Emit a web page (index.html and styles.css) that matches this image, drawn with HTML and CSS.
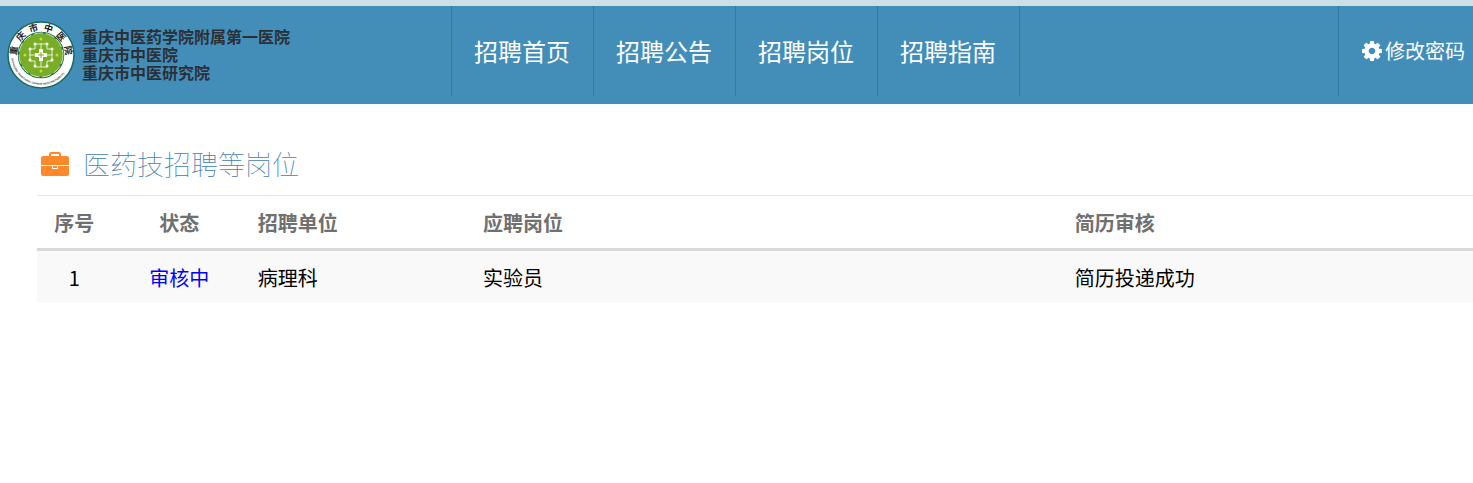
FILE: index.html
```html
<!DOCTYPE html>
<html lang="zh-CN">
<head>
<meta charset="utf-8">
<meta name="viewport" content="width=device-width, initial-scale=1">
<title>医药技招聘等岗位</title>
<link rel="stylesheet" href="styles.css">
</head>
<body>
<header class="header">
  <a class="brand" href="#">
    <svg class="brand-logo" viewBox="0 0 68 68" aria-hidden="true">
      <defs>
        <path id="arc-foot" d="M8.700 74A59.600 59.600 0 0 0 127.300 74"/>
      </defs>
      <circle cx="34" cy="34" r="33" fill="#fff" stroke="#176b5c" stroke-width="1.500"/>
      <circle cx="34" cy="34" r="22.500" fill="#78ad25" stroke="#176b5c" stroke-width="1.500"/>
      <circle cx="34" cy="34" r="22" fill="none" stroke="#d5e8a8" stroke-width="1" stroke-dasharray="9 3"/>
      <g fill="none" stroke="#e6f2c8" stroke-width="1">
        <path d="M34 22v24M22 34h24M28 23h12v5h5v12h-5v6H28v-6h-5V28h5z"/>
      </g>
      <g fill="#fff">
        <circle cx="28" cy="23" r="1.500"/><circle cx="40" cy="23" r="1.500"/>
        <circle cx="23" cy="28" r="1.500"/><circle cx="45" cy="28" r="1.500"/>
        <circle cx="23" cy="39" r="1.500"/><circle cx="45" cy="39" r="1.500"/>
        <circle cx="28" cy="45" r="1.500"/><circle cx="40" cy="45" r="1.500"/>
        <path d="M32 28h4v4h4v4h-4v4h-4v-4h-4v-4h4z"/>
      </g>
      <g fill="#b9dc4c">
        <circle cx="34" cy="18" r="1.500"/><circle cx="34" cy="50" r="1.500"/>
        <circle cx="18" cy="34" r="1.500"/><circle cx="50" cy="34" r="1.500"/>
      </g>
      <path d="M34 31v6M31 34h6" stroke="#78ad25" stroke-width="1"/>
      <g class="seal-name">
        <text transform="translate(7 29.500) rotate(-80)" y="3">重</text>
        <text transform="translate(14 15.500) rotate(-48)" y="3">庆</text>
        <text transform="translate(26.500 7.500) rotate(-16)" y="3">市</text>
        <text transform="translate(41.500 7.500) rotate(16)" y="3">中</text>
        <text transform="translate(54 15.500) rotate(48)" y="3">医</text>
        <text transform="translate(61 29.500) rotate(80)" y="3">院</text>
      </g>
      <text class="seal-foot" transform="scale(.5)"><textPath href="#arc-foot">CHONGQING TRADITIONAL CHINESE MEDICINE HOSPITAL</textPath></text>
    </svg>
    <span class="brand-text">
      <span>重庆中医药学院附属第一医院</span>
      <span>重庆市中医院</span>
      <span>重庆市中医研究院</span>
    </span>
  </a>
  <nav class="nav">
    <a class="nav-link" href="#">招聘首页</a>
    <a class="nav-link" href="#">招聘公告</a>
    <a class="nav-link" href="#">招聘岗位</a>
    <a class="nav-link" href="#">招聘指南</a>
  </nav>
  <a class="account-link" href="#">
    <svg class="cog" viewBox="0 128 1536 1536" aria-hidden="true"><path fill="currentColor" d="M1024 896q0-106-75-181t-181-75-181 75-75 181 75 181 181 75 181-75 75-181zm512-109v222q0 12-8 23t-20 13l-185 28q-19 54-39 91 35 50 107 138 10 12 10 25t-9 23q-27 37-99 108t-94 71q-12 0-26-9l-138-108q-44 23-91 38-16 136-29 186-7 28-36 28h-222q-14 0-24.500-8.500t-11.500-21.500l-28-184q-49-16-90-37l-141 107q-10 9-25 9-14 0-25-11-126-114-165-168-7-10-7-23 0-12 8-23 15-21 51-66.500t54-70.500q-27-50-41-99l-183-27q-13-2-21-12.500t-8-23.500v-222q0-12 8-23t19-13l186-28q14-46 39-92-40-57-107-138-10-12-10-24 0-10 9-23 26-36 98.500-107.500t94.500-71.500q13 0 26 10l138 107q44-23 91-38 16-136 29-186 7-28 36-28h222q14 0 24.500 8.500t11.500 21.500l28 184q49 16 90 37l142-107q9-9 24-9 13 0 25 10 129 119 165 170 7 8 7 22 0 12-8 23-15 21-51 66.500t-54 70.500q26 50 41 98l183 28q13 2 21 12.500t8 23.500z"/></svg>
    <span>修改密码</span>
  </a>
</header>
<main class="content">
  <h1 class="title">
    <svg class="briefcase" viewBox="0 0 28 24" aria-hidden="true">
      <path fill="none" stroke="#ff892a" stroke-width="2" d="M9 5V2q0-1 1-1h8q1 0 1 1v3"/>
      <path fill="#ff892a" d="M2 4h24q2 0 2 2v7H0V6q0-2 2-2zM0 14h11v2q0 1 1 1h4q1 0 1-1v-2h11v8q0 2-2 2H2q-2 0-2-2zM12 14h4v2h-4z"/>
    </svg>
    <span>医药技招聘等岗位</span>
  </h1>
  <table class="jobs">
    <thead>
      <tr>
        <th class="col-no" scope="col">序号</th>
        <th class="col-state" scope="col">状态</th>
        <th class="col-unit" scope="col">招聘单位</th>
        <th class="col-post" scope="col">应聘岗位</th>
        <th class="col-review" scope="col">简历审核</th>
      </tr>
    </thead>
    <tbody>
      <tr>
        <td class="col-no">1</td>
        <td class="col-state state">审核中</td>
        <td>病理科</td>
        <td>实验员</td>
        <td>简历投递成功</td>
      </tr>
    </tbody>
  </table>
</main>
</body>
</html>
```
FILE: styles.css
```css
* {
  box-sizing: border-box;
}

body {
  margin: 0;
  background: #fff;
  color: #000;
  font-family: "Noto Sans CJK SC", sans-serif;
  font-size: 20px;
}

a {
  color: inherit;
  text-decoration: none;
}

.header {
  display: flex;
  align-items: flex-start;
  padding-bottom: 8px;
  border-top: 6px solid #cce1e5;
  background: #438eb9;
  color: #fff;
}

.brand {
  display: flex;
  align-items: center;
  gap: 7px;
  flex: 0 0 451px;
  padding: 15px 0 0 7px;
}

.brand-logo {
  width: 68px;
  height: 68px;
}

.seal-name {
  font-size: 9px;
  font-weight: 700;
  fill: #222;
  text-anchor: middle;
}

.seal-foot {
  font-family: "Liberation Sans", sans-serif;
  font-size: 5px;
  font-weight: 700;
  fill: #333;
}

.brand-text {
  display: flex;
  flex-direction: column;
  padding-bottom: 2px;
  color: #2b3036;
  font-size: 16px;
  font-weight: 700;
  line-height: 18px;
}

.nav {
  display: flex;
  border-left: 1px solid #3279a3;
}

.nav-link {
  padding: 0 23px 0 22px;
  border-right: 1px solid #3279a3;
  font-size: 24px;
  line-height: 90px;
  white-space: nowrap;
}

.account-link {
  display: flex;
  align-items: center;
  gap: 3px;
  margin-left: auto;
  padding: 0 8px 0 23px;
  border-left: 1px solid #3279a3;
  line-height: 90px;
  white-space: nowrap;
}

.cog {
  width: 20px;
  height: 20px;
}

.content {
  padding: 40px 0 0 37px;
}

.title {
  display: flex;
  align-items: center;
  gap: 14px;
  margin: 0;
  padding: 0 4px 11px;
  color: #4180b0;
  font-size: 27px;
  font-weight: 100;
  line-height: 40px;
}

.briefcase {
  width: 28px;
  height: 24px;
}

.jobs {
  width: 100%;
  border-collapse: separate;
  border-spacing: 0;
  border-top: 1px solid #dce8ec;
  table-layout: fixed;
  line-height: 32px;
}

.jobs th,
.jobs td {
  padding: 11px 10px 9px 11px;
  text-align: left;
}

.jobs th {
  border-bottom: 3px solid #d9d9d9;
  color: #707070;
  font-weight: 700;
}

.jobs td {
  background: #f9f9f9;
}

.jobs .col-no,
.jobs .col-state {
  padding-left: 10px;
  text-align: center;
}

.col-no {
  width: 5.2%;
}

.col-state {
  width: 9.4%;
}

.col-unit {
  width: 15.7%;
}

.col-post {
  width: 41.2%;
}

.jobs .state {
  color: #00f;
}
```
